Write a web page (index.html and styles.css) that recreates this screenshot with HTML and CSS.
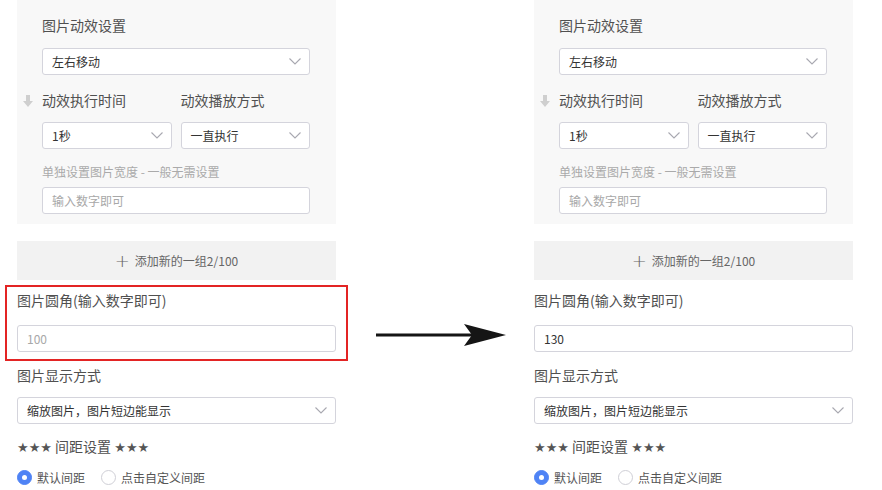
FILE: index.html
```html
<!DOCTYPE html>
<html lang="zh">
<head>
<meta charset="utf-8">
<link rel="stylesheet" href="styles.css">
</head>
<body>
<div class="page">
  <section class="col">
    <div class="panel">
      <div class="label first">图片动效设置</div>
      <div class="select wide"><span>左右移动</span><svg class="chev" viewBox="0 0 12 7"><path d="M0.5 0.5 L6 6 L11.5 0.5"/></svg></div>
      <div class="pair labels">
        <svg class="drag" viewBox="0 0 12 12"><path d="M4 0 H8 V6 H11 L6 12 L1 6 H4 Z"/></svg>
        <div class="label">动效执行时间</div>
        <div class="label">动效播放方式</div>
      </div>
      <div class="pair selects">
        <div class="select"><span>1秒</span><svg class="chev" viewBox="0 0 12 7"><path d="M0.5 0.5 L6 6 L11.5 0.5"/></svg></div>
        <div class="select"><span>一直执行</span><svg class="chev" viewBox="0 0 12 7"><path d="M0.5 0.5 L6 6 L11.5 0.5"/></svg></div>
      </div>
      <div class="hint">单独设置图片宽度 - 一般无需设置</div>
      <div class="input small placeholder">输入数字即可</div>
    </div>
    <div class="add"><span class="plus">+</span> 添加新的一组2/100</div>
    <div class="field highlighted">
      <div class="label">图片圆角(输入数字即可)</div>
      <div class="input placeholder num">100</div>
    </div>
    <div class="label mid">图片显示方式</div>
    <div class="select big"><span>缩放图片，图片短边能显示</span><svg class="chev" viewBox="0 0 12 7"><path d="M0.5 0.5 L6 6 L11.5 0.5"/></svg></div>
    <div class="label stars"><span class="st">★★★</span> 间距设置 <span class="st">★★★</span></div>
    <div class="radios">
      <label class="radio"><span class="dot on"></span>默认间距</label>
      <label class="radio"><span class="dot"></span>点击自定义间距</label>
    </div>
  </section>

  <div class="arrow-col">
    <svg class="arrow" viewBox="0 0 130 24"><path d="M0 10.5 H100 V13.5 H0 Z"/><path d="M88 1 L130 12 L88 23 L96 12 Z"/></svg>
  </div>

  <section class="col">
    <div class="panel">
      <div class="label first">图片动效设置</div>
      <div class="select wide"><span>左右移动</span><svg class="chev" viewBox="0 0 12 7"><path d="M0.5 0.5 L6 6 L11.5 0.5"/></svg></div>
      <div class="pair labels">
        <svg class="drag" viewBox="0 0 12 12"><path d="M4 0 H8 V6 H11 L6 12 L1 6 H4 Z"/></svg>
        <div class="label">动效执行时间</div>
        <div class="label">动效播放方式</div>
      </div>
      <div class="pair selects">
        <div class="select"><span>1秒</span><svg class="chev" viewBox="0 0 12 7"><path d="M0.5 0.5 L6 6 L11.5 0.5"/></svg></div>
        <div class="select"><span>一直执行</span><svg class="chev" viewBox="0 0 12 7"><path d="M0.5 0.5 L6 6 L11.5 0.5"/></svg></div>
      </div>
      <div class="hint">单独设置图片宽度 - 一般无需设置</div>
      <div class="input small placeholder">输入数字即可</div>
    </div>
    <div class="add"><span class="plus">+</span> 添加新的一组2/100</div>
    <div class="field">
      <div class="label">图片圆角(输入数字即可)</div>
      <div class="input num">130</div>
    </div>
    <div class="label mid">图片显示方式</div>
    <div class="select big"><span>缩放图片，图片短边能显示</span><svg class="chev" viewBox="0 0 12 7"><path d="M0.5 0.5 L6 6 L11.5 0.5"/></svg></div>
    <div class="label stars"><span class="st">★★★</span> 间距设置 <span class="st">★★★</span></div>
    <div class="radios">
      <label class="radio"><span class="dot on"></span>默认间距</label>
      <label class="radio"><span class="dot"></span>点击自定义间距</label>
    </div>
  </section>
</div>
</body>
</html>
```

FILE: styles.css
```css
* { box-sizing: border-box; }
html, body { margin: 0; padding: 0; background: #fff; }
body {
  font-family: "Noto Sans CJK SC", "Microsoft YaHei", sans-serif;
  color: #555;
  overflow: hidden;
}
.page {
  display: flex;
  align-items: flex-start;
  padding-left: 17px;
  width: 882px;
  height: 490px;
}
.col {
  width: 319px;
  display: flex;
  flex-direction: column;
}
.panel {
  background: #f8f8f8;
  padding: 0 26px 10px 25px;
  display: flex;
  flex-direction: column;
}
.label {
  font-size: 14px;
  line-height: 20px;
  height: 20px;
  color: #505050;
  white-space: nowrap;
}
.label.first { margin-top: 15px; }
.select, .input {
  height: 27px;
  background: #fff;
  border: 1px solid #d4d4dc;
  border-radius: 3px;
  display: flex;
  align-items: center;
  justify-content: space-between;
  padding: 0 8px 0 9px;
  font-size: 12px;
  color: #333;
  white-space: nowrap;
}
.select.wide { margin-top: 13px; }
.chev {
  width: 12px;
  height: 7px;
  fill: none;
  stroke: #a8a8b0;
  stroke-width: 1.1;
  flex: none;
}
.pair {
  display: grid;
  grid-template-columns: 1fr 1fr;
  column-gap: 9px;
  position: relative;
}
.pair.labels { margin-top: 15px; }
.pair.selects { margin-top: 12px; }
.drag {
  position: absolute;
  left: -20px;
  top: 5px;
  width: 12px;
  height: 12px;
  fill: #cfcfcf;
}
.hint {
  margin-top: 14px;
  font-size: 12px;
  line-height: 18px;
  color: #aaa;
  white-space: nowrap;
}
.input.small { margin-top: 6px; }
.input.placeholder { color: #a8a8a8; }
.input.num { font-size: 12px; padding-left: 9px; }
.add {
  margin-top: 17px;
  height: 39px;
  background: #f2f2f2;
  display: flex;
  align-items: center;
  justify-content: center;
  font-size: 12px;
  color: #666;
}
.plus {
  font-size: 18px;
  font-weight: 300;
  font-family: "DejaVu Sans", sans-serif;
  margin-right: 5px;
  line-height: 1;
  color: #666;
}
.field {
  position: relative;
  margin-top: 10px;
  display: flex;
  flex-direction: column;
}
.field .input { margin-top: 15px; }
.field.highlighted::after {
  content: "";
  position: absolute;
  left: -12px;
  right: -12px;
  top: -5px;
  bottom: -9px;
  border: 2px solid #e32424;
  pointer-events: none;
}
.label.mid { margin-top: 13px; }
.select.big { margin-top: 12px; }
.label.stars { margin-top: 12px; }
.st {
  font-family: "DejaVu Sans", sans-serif;
  font-size: 13px;
  color: #555;
}
.radios {
  margin-top: 11px;
  display: flex;
  align-items: center;
  gap: 16px;
  height: 20px;
}
.radio {
  display: flex;
  align-items: center;
  font-size: 12px;
  color: #555;
}
.dot {
  width: 15px;
  height: 15px;
  border-radius: 50%;
  border: 1px solid #cfcfd6;
  background: #fff;
  margin-right: 5px;
  position: relative;
}
.dot.on {
  background: #4f83f5;
  border-color: #4f83f5;
}
.dot.on::after {
  content: "";
  position: absolute;
  left: 50%;
  top: 50%;
  width: 5px;
  height: 5px;
  margin: -2.5px 0 0 -2.5px;
  border-radius: 50%;
  background: #fff;
}
.arrow-col {
  width: 198px;
  padding: 323px 0 0 40px;
}
.arrow {
  display: block;
  width: 130px;
  height: 24px;
  fill: #151515;
}
```
